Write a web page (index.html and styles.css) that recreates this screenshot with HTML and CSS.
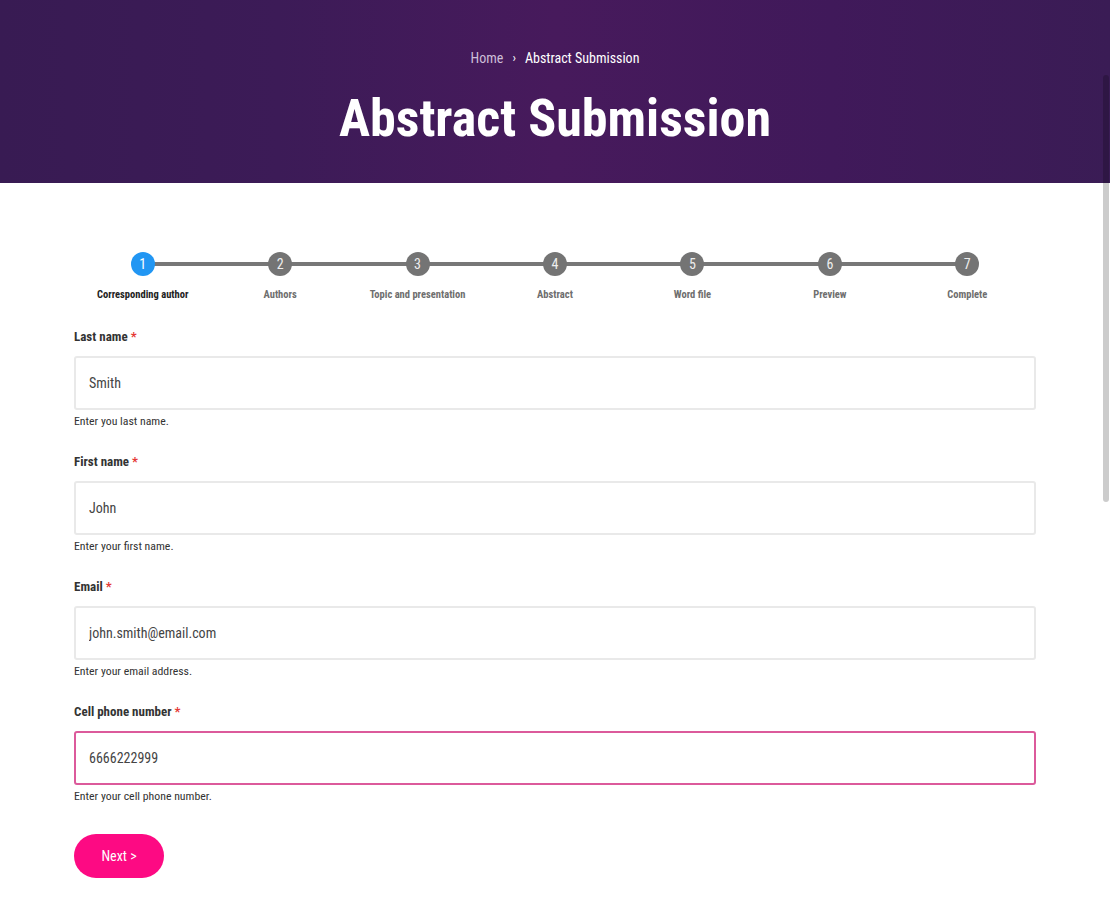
FILE: index.html
```html
<!DOCTYPE html>
<html lang="en">
<head>
<meta charset="utf-8">
<title>Abstract Submission</title>
<link rel="stylesheet" href="styles.css">
</head>
<body>
<header class="hero">
  <nav class="crumbs"><a class="crumb-link" href="#">Home</a><span class="crumb-sep">›</span><span class="crumb-current">Abstract Submission</span></nav>
  <h1 class="hero-title">Abstract Submission</h1>
</header>
<main class="content">
  <ol class="stepper">
    <li class="step step-active"><span class="step-dot">1</span><span class="step-label">Corresponding author</span></li>
    <li class="step"><span class="step-dot">2</span><span class="step-label">Authors</span></li>
    <li class="step"><span class="step-dot">3</span><span class="step-label">Topic and presentation</span></li>
    <li class="step"><span class="step-dot">4</span><span class="step-label">Abstract</span></li>
    <li class="step"><span class="step-dot">5</span><span class="step-label">Word file</span></li>
    <li class="step"><span class="step-dot">6</span><span class="step-label">Preview</span></li>
    <li class="step"><span class="step-dot">7</span><span class="step-label">Complete</span></li>
  </ol>
  <form class="form">
    <div class="field">
      <label class="field-label">Last name <span class="req">*</span></label>
      <input class="field-input" type="text" value="Smith">
      <p class="field-help">Enter you last name.</p>
    </div>
    <div class="field">
      <label class="field-label">First name <span class="req">*</span></label>
      <input class="field-input" type="text" value="John">
      <p class="field-help">Enter your first name.</p>
    </div>
    <div class="field">
      <label class="field-label">Email <span class="req">*</span></label>
      <input class="field-input" type="text" value="john.smith@email.com">
      <p class="field-help">Enter your email address.</p>
    </div>
    <div class="field">
      <label class="field-label">Cell phone number <span class="req">*</span></label>
      <input class="field-input field-focus" type="text" value="6666222999">
      <p class="field-help">Enter your cell phone number.</p>
    </div>
    <button class="btn-next" type="button">Next &gt;</button>
  </form>
</main>
<div class="scroll-thumb"></div>
</body>
</html>
```
FILE: styles.css
```css
* { box-sizing: border-box; }
html, body { margin: 0; padding: 0; }
body {
  font-family: "Roboto Condensed", "Liberation Sans Narrow", Roboto, sans-serif;
  font-stretch: condensed;
  background: #fff;
  color: #333;
  overflow: hidden;
}
.hero {
  height: 183px;
  background: linear-gradient(90deg, #381b53 0%, #3c1b57 25%, #471a5c 50%, #40195a 75%, #3a1c55 100%);
  display: flex;
  flex-direction: column;
  align-items: center;
  padding-top: 48px;
}
.crumbs {
  font-size: 14px;
  line-height: 20px;
  display: flex;
  align-items: center;
}
.crumb-link { color: #cdbfd8; text-decoration: none; }
.crumb-sep { color: #fff; margin: 0 9px; font-size: 13px; }
.crumb-current { color: #fff; }
.hero-title {
  margin: 21px 0 0;
  color: #fff;
  font-size: 52px;
  line-height: 60px;
  font-weight: 700;
}
.content {
  width: 962px;
  margin: 0 0 0 74px;
  padding-top: 69px;
}
.stepper {
  list-style: none;
  margin: 0;
  padding: 0;
  display: grid;
  grid-template-columns: repeat(7, 1fr);
}
.step {
  position: relative;
  display: flex;
  flex-direction: column;
  align-items: center;
}
.step::before {
  content: "";
  position: absolute;
  top: 10px;
  left: 0;
  right: 0;
  height: 4px;
  background: #777;
}
.step:first-child::before { left: 50%; }
.step:last-child::before { right: 50%; }
.step-dot {
  position: relative;
  width: 24px;
  height: 24px;
  border-radius: 50%;
  background: #747474;
  color: #eee;
  font-size: 14px;
  line-height: 24px;
  text-align: center;
}
.step-active .step-dot { background: #2196f3; color: #fff; }
.step-label {
  margin-top: 13px;
  font-size: 10.5px;
  line-height: 12px;
  font-weight: 700;
  color: #6e6e6e;
}
.step-active .step-label { color: #222; }
.form { padding-top: 27px; }
.field { margin-bottom: 25px; }
.field-label {
  display: block;
  font-size: 13px;
  line-height: 18px;
  font-weight: 700;
  color: #333;
  margin-bottom: 10px;
}
.req { color: #e53935; }
.field-input {
  display: block;
  width: 100%;
  height: 54px;
  border: 2px solid #e9e9e9;
  border-radius: 3px;
  padding: 0 13px;
  font-family: inherit;
  font-stretch: condensed;
  font-size: 14px;
  color: #444;
  background: #fff;
  outline: none;
}
.field-focus { border-color: #dc5a9b; }
.field-help {
  margin: 4px 0 0;
  font-size: 11.8px;
  line-height: 14px;
  color: #333;
}
.btn-next {
  margin-top: 6px;
  width: 90px;
  height: 44px;
  border: none;
  border-radius: 22px;
  background: #fd0a83;
  color: #fff;
  font-family: inherit;
  font-stretch: condensed;
  font-size: 14px;
}
.scroll-thumb {
  position: fixed;
  top: 75px;
  right: 1px;
  width: 6px;
  height: 427px;
  border-radius: 3px;
  background: rgba(0, 0, 0, 0.2);
}
```
